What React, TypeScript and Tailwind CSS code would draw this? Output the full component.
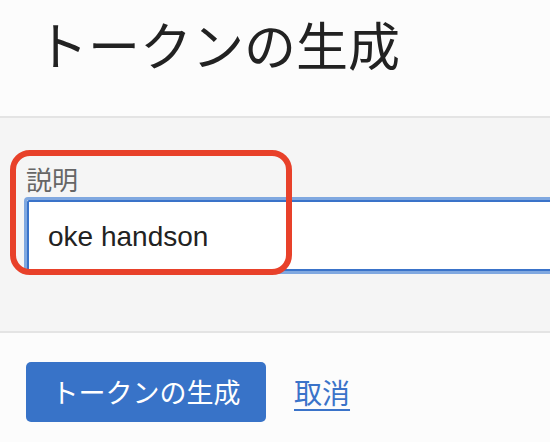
import React from "react";

const jp = "font-['Hiragino_Sans','Noto_Sans_CJK_JP',sans-serif]";

export default function App() {
  return (
    <div className={`w-[550px] h-[442px] overflow-hidden bg-[#fcfcfc] ${jp}`}>
      {/* header */}
      <div className="h-[118px] border-b-2 border-[#e4e4e4] pl-[36px] pt-[4px]">
        <h1 className="text-[52px] leading-[80px] text-[#222] tracking-[0px]">
          トークンの生成
        </h1>
      </div>

      {/* body */}
      <div className="relative h-[215px] bg-[#f5f5f5] border-b-2 border-[#e4e4e4] pl-[24px] pt-[43px]">
        <label className="block text-[26px] leading-[35px] text-[#666] pl-[2px]">説明</label>
        <div className="mt-[1px] h-[77px] w-[560px] rounded-[4px] border-[3px] border-[#80a8e0] bg-white">
          <div className="h-full border-[2px] border-[#3a73c9] rounded-[2px] flex items-center pl-[19px]">
            <span className="font-['Liberation_Sans',sans-serif] text-[28px] text-[#222] pt-[2px]">
              oke handson
            </span>
          </div>
        </div>
        {/* annotation */}
        <div className="absolute left-[10px] top-[32px] w-[282px] h-[125px] rounded-[20px] border-[6px] border-[#e8412a]" />
      </div>

      {/* footer */}
      <div className="flex items-center gap-[28px] pl-[26px] pt-[29px]">
        <button className="h-[60px] w-[240px] rounded-[5px] bg-[#3873c8] text-white text-[27px] tracking-[0px]">
          トークンの生成
        </button>
        <a href="#" className="text-[28px] text-[#3a73c9] underline underline-offset-[5px]">
          取消
        </a>
      </div>
    </div>
  );
}
